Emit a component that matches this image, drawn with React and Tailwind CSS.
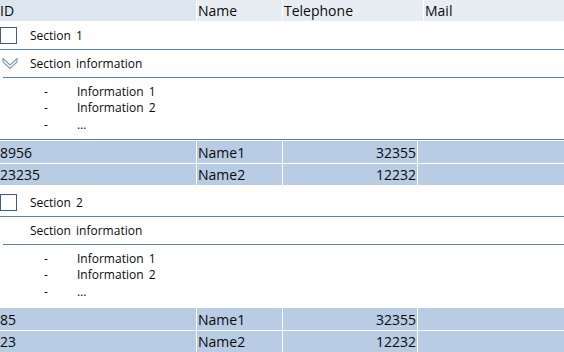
import React from "react";

const font = { fontFamily: '"Open Sans", "Liberation Sans", sans-serif' };

function Chevron() {
  return (
    <svg width="16" height="12" viewBox="0 0 16 12" className="ml-[2px]">
      <polygon
        points="1,0.5 8,7 15,0.5 15,4 8,10.5 1,4"
        fill="white"
        stroke="#7e97bd"
        strokeWidth="1.1"
        strokeLinejoin="miter"
      />
    </svg>
  );
}

function DataRow({ id, name, tel, h }) {
  return (
    <div className={`flex gap-[1px] ${h} text-[14px] text-[#0a0a0a]`}>
      <div className="w-[196px] bg-[#b8cce4] flex items-center pl-0">{id}</div>
      <div className="w-[85px] bg-[#b8cce4] flex items-center pl-[1px] ml-[0px]">{name}</div>
      <div className="w-[134px] bg-[#b8cce4] flex items-center justify-end pr-[1px]">{tel}</div>
      <div className="flex-1 bg-[#b8cce4]"></div>
    </div>
  );
}

function Section({ title, chevron, bottomLine, rows }) {
  return (
    <div className="flex flex-col">
      <div className="h-[29px] border-b border-[#5a80b2] flex items-start">
        <div className="w-[17px] h-[17px] border border-[#3d5d8a] mt-[6px]"></div>
        <div className="ml-[13px] mt-[6px] text-[12px] leading-[17px] text-[#0a0a0a] [word-spacing:2px]">
          {title}
        </div>
      </div>
      <div className="h-[28px] flex flex-col">
        <div className="h-[27px] flex items-center">
          <div className="w-[30px] flex items-center">{chevron ? <Chevron /> : null}</div>
          <div className="text-[12px] leading-[17px] text-[#0a0a0a] [word-spacing:2px]">Section information</div>
        </div>
        <div className="h-[1px] ml-[3px] bg-[#5a80b2]"></div>
      </div>
      <div className="h-[62px] flex flex-col">
        <div className="h-[61px] pt-[5px] text-[12px] leading-[17px] text-[#0a0a0a] [word-spacing:2px]">
          <div className="flex pl-[44px]"><span className="w-[33px]">-</span><span>Information 1</span></div>
          <div className="flex pl-[44px] mt-[-1px]"><span className="w-[33px]">-</span><span>Information 2</span></div>
          <div className="flex pl-[44px]"><span className="w-[33px]">-</span><span>…</span></div>
        </div>
        <div className={`h-[1px] ${bottomLine ? "bg-[#5a80b2]" : ""}`}></div>
      </div>
      <div className="h-[1px]"></div>
      <div className="flex flex-col gap-[1px]">
        <DataRow id={rows[0][0]} name={rows[0][1]} tel={rows[0][2]} h="h-[22px]" />
        <DataRow id={rows[1][0]} name={rows[1][1]} tel={rows[1][2]} h="h-[21px]" />
      </div>
      <div className="h-[3px]"></div>
    </div>
  );
}

export default function App() {
  return (
    <div className="w-[564px] h-[352px] bg-white overflow-hidden" style={font}>
      <div className="flex h-[21px] gap-[1px] text-[14px] text-[#0a0a0a]">
        <div className="w-[196px] bg-[#dce6f1] flex items-center leading-none">ID</div>
        <div className="w-[85px] bg-[#e8edf4] flex items-center pl-[1px] leading-none">Name</div>
        <div className="w-[140px] bg-[#e8edf4] flex items-center pl-[1px] leading-none">Telephone</div>
        <div className="flex-1 bg-[#e8edf4] flex items-center pl-[1px] leading-none">Mail</div>
      </div>
      <Section
        title="Section 1"
        chevron
        bottomLine
        rows={[["8956", "Name1", "32355"], ["23235", "Name2", "12232"]]}
      />
      <Section
        title="Section 2"
        chevron={false}
        bottomLine={false}
        rows={[["85", "Name1", "32355"], ["23", "Name2", "12232"]]}
      />
    </div>
  );
}
